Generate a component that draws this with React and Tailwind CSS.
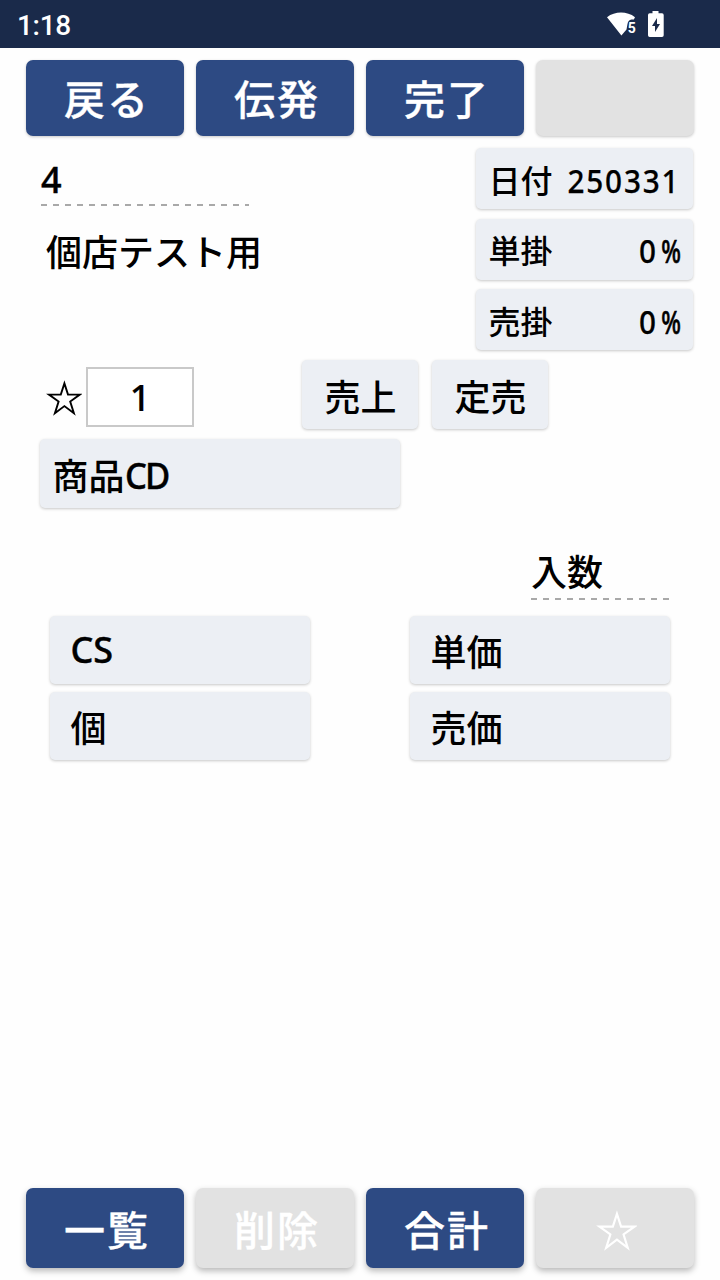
const elevated = 'shadow-[0_1px_3px_rgba(0,0,0,0.22)]'
const raised = 'shadow-[0_3px_6px_rgba(0,0,0,0.28)]'

function ActionButton({ label, disabled, bottom }) {
  return (
    <button
      className={`flex w-[158px] items-center justify-center rounded-[7px] pl-1 text-[41px] leading-none font-medium tracking-[2px] text-white [-webkit-text-stroke:0.3px_currentColor] ${bottom ? 'h-20' : 'h-19 pb-[2px]'} ${disabled ? 'bg-[#e2e2e2]' : 'bg-[#2d4a83]'} ${bottom ? raised : elevated}`}
    >
      {label}
    </button>
  )
}

function SideButton({ label, value, percent }) {
  return (
    <button className={`flex h-[61px] w-[217px] items-center rounded-[5px] bg-[#eceff4] pl-[13px] text-[32px] leading-none ${elevated}`}>
      <span className="w-16 whitespace-nowrap">{label}</span>
      <span className={`ml-auto flex items-center pt-[3px] font-['Noto_Sans'] text-[33px] ${percent ? 'pr-[11px]' : 'pr-[12px]'}`}>
        <span className="origin-right scale-x-[0.9] tracking-[2px] [-webkit-text-stroke:0.25px_currentColor]">{value}</span>
        {percent && (
          <span className="ml-1 flex w-[20px] justify-center">
            <span className="scale-x-[0.7] [-webkit-text-stroke:0.6px_currentColor]">%</span>
          </span>
        )}
      </span>
    </button>
  )
}

function DashedLine({ className }) {
  return (
    <div className={`h-[2px] bg-[repeating-linear-gradient(90deg,#a9a9a9_0px,#a9a9a9_6px,transparent_6px,transparent_12px)] ${className}`} />
  )
}

function ItemButton({ children }) {
  return (
    <button className={`flex h-[68px] w-[260px] items-center rounded-[5px] bg-[#eceff4] pl-[20.5px] text-[36px] leading-none ${elevated}`}>
      {children}
    </button>
  )
}

function Star({ size, className }) {
  return (
    <svg className={className} width={size} height={size} viewBox="0 0 36 36" fill="none" stroke="currentColor" strokeWidth="1.9" strokeLinejoin="miter" strokeMiterlimit="4">
      <path d="M18.4 3.4L22 14.6H33.8L24.2 21.5L27.9 33.2L18.4 26.1L8.9 33.2L12.6 21.5L3 14.6H14.8Z" />
    </svg>
  )
}

function StatusBar() {
  return (
    <header className="flex h-12 items-center bg-[#1a2a4a] pr-[55px] pl-[17px] text-white">
      <span className="pt-[3px] font-['Roboto'] text-[28px] leading-none font-medium tracking-[-0.3px]">1:18</span>
      <svg className="ml-auto" width="32" height="28" viewBox="0 0 32 28">
        <path d="M0 7.2C8 1 20 1 28 7.2L26.8 9.5H24.5Q21 10 20.5 14L19.5 19.4L14.4 25.4Z" fill="white" />
        <text x="20.7" y="22.8" fill="white" fontFamily="Roboto" fontSize="14" fontWeight="700">5</text>
      </svg>
      <svg className="ml-2" width="18" height="28" viewBox="0 0 18 28">
        <path d="M5.5 1H11.5V3.3H15Q16.7 3.3 16.7 5V25.3Q16.7 27 15 27H2.7Q1 27 1 25.3V5Q1 3.3 2.7 3.3H5.5Z" fill="white" />
        <path d="M10 8L5 16H8V22L13 14H10Z" fill="#1a2a4a" />
      </svg>
    </header>
  )
}

export default function App() {
  return (
    <div className="flex h-[1280px] w-[720px] flex-col overflow-hidden bg-[#fefefe] font-['Noto_Sans_CJK_JP',sans-serif] font-medium text-black">
      <StatusBar />

      <nav className="flex gap-3 pt-3 pl-[26px]">
        <ActionButton label="戻る" />
        <ActionButton label="伝発" />
        <ActionButton label="完了" />
        <ActionButton label="" disabled />
      </nav>

      <main className="flex flex-1 flex-col">
        <section className="flex h-[224px] justify-between pr-[27.5px] pl-[41px]">
          <div className="pt-[22px]">
            <div className="flex h-[46px] items-center pb-[2px] font-['Noto_Sans'] text-[36px] leading-none [-webkit-text-stroke:0.4px_currentColor]">4</div>
            <DashedLine className="w-[208px]" />
            <div className="pt-[26px] pl-[5px] text-[36px] leading-[36px]">個店テスト用</div>
          </div>
          <div className="flex flex-col gap-[9.5px] pt-3">
            <SideButton label="日付" value="250331" />
            <SideButton label="単掛" value="0" percent />
            <SideButton label="売掛" value="0" percent />
          </div>
        </section>

        <section className="flex h-[79px] pl-[46px] text-[36px] leading-none">
          <div className="flex w-10 pt-5">
            <Star size={36} />
          </div>
          <div className="mt-[7px] flex h-[60px] w-[108px] items-center justify-center border-2 border-[#c9c9c9] bg-white pt-px font-['Noto_Sans'] [-webkit-text-stroke:0.2px_currentColor]">1</div>
          <div className="ml-[108px] flex gap-[14px]">
            <button className={`h-[69px] w-[116px] rounded-[5px] bg-[#eceff4] pl-px ${elevated}`}>売上</button>
            <button className={`h-[69px] w-[116px] rounded-[5px] bg-[#eceff4] pl-px ${elevated}`}>定売</button>
          </div>
        </section>

        <button className={`ml-10 flex h-[69px] w-[360px] shrink-0 items-center rounded-[5px] bg-[#eceff4] pl-[12.5px] text-[36px] leading-none ${elevated}`}>
          商品
          <span className="origin-left scale-x-[0.96] pt-1 font-['Noto_Sans'] tracking-[-2px] [-webkit-text-stroke:0.4px_currentColor]">CD</span>
        </button>

        <section className="ml-[531px] pt-11">
          <div className="h-[46px] text-[36px] leading-[36px]">入数</div>
          <DashedLine className="w-[139px]" />
        </section>

        <section className="grid grid-cols-[260px_260px] gap-x-[100px] gap-y-2 pt-4 pl-[50px]">
          <ItemButton>
            <span className="font-['Noto_Sans'] [-webkit-text-stroke:0.4px_currentColor]">CS</span>
          </ItemButton>
          <ItemButton>単価</ItemButton>
          <ItemButton>個</ItemButton>
          <ItemButton>売価</ItemButton>
        </section>
      </main>

      <nav className="flex gap-3 pb-3 pl-[26px]">
        <ActionButton label="一覧" bottom />
        <ActionButton label="削除" disabled bottom />
        <ActionButton label="合計" bottom />
        <ActionButton label={<Star size={41} className="mt-1 -ml-[2px]" />} disabled bottom />
      </nav>
    </div>
  )
}
